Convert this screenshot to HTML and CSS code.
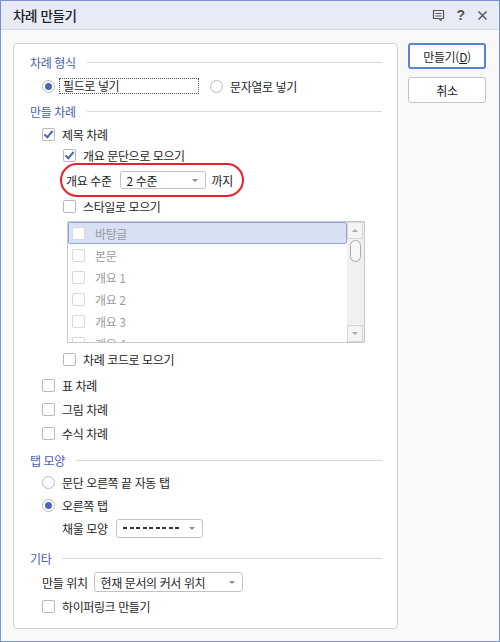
FILE: index.html
```html
<!DOCTYPE html>
<html lang="ko">
<head>
<meta charset="utf-8">
<link rel="stylesheet" href="styles.css">
</head>
<body>
<div class="window">
  <div class="titlebar">
    <div class="title">차례 만들기</div>
    <div class="tb-icons">
      <svg class="tb-ico" width="13" height="13" viewBox="0 0 13 13"><path d="M1.5 1.5h10v8h-2.5v2l-2-2H1.5z" fill="none" stroke="#555" stroke-width="1.2" stroke-linejoin="round"/><path d="M3.5 4.5h6M3.5 7h6" stroke="#555" stroke-width="1.2"/></svg>
      <span class="tb-q">?</span>
      <svg class="tb-ico" width="11" height="11" viewBox="0 0 11 11"><path d="M1.5 1.5l8 8M9.5 1.5l-8 8" stroke="#555" stroke-width="1.4"/></svg>
    </div>
  </div>
  <div class="body">
    <div class="panel">
      <div class="row hdr m8"><span class="hdr-text">차례 형식</span><span class="hdr-line"></span></div>
      <div class="row l1 m4">
        <span class="radio on"></span><span class="lbl focus">필드로 넣기</span>
        <span class="radio r2"></span><span class="lbl">문자열로 넣기</span>
      </div>
      <div class="row hdr m5"><span class="hdr-text">만들 차례</span><span class="hdr-line"></span></div>
      <div class="row l1 m3"><span class="cb on"></span><span class="lbl">제목 차례</span></div>
      <div class="row l2 m1"><span class="cb on"></span><span class="lbl">개요 문단으로 모으기</span></div>
      <div class="row level m5">
        <span class="txt">개요 수준</span>
        <span class="combo c-level"><span>2 수준</span><span class="arrow"></span></span>
        <span class="txt until">까지</span>
        <span class="mark"></span>
      </div>
      <div class="row l2 m6"><span class="cb"></span><span class="lbl">스타일로 모으기</span></div>
      <div class="listbox">
        <div class="items">
          <div class="item sel"><span class="cb dis"></span><span>바탕글</span></div>
          <div class="item"><span class="cb dis"></span><span>본문</span></div>
          <div class="item"><span class="cb dis"></span><span>개요 1</span></div>
          <div class="item"><span class="cb dis"></span><span>개요 2</span></div>
          <div class="item"><span class="cb dis"></span><span>개요 3</span></div>
          <div class="item"><span class="cb dis"></span><span>개요 4</span></div>
        </div>
        <div class="scrollbar">
          <div class="sb-btn"><span class="sb-up"></span></div>
          <div class="sb-track"><div class="sb-thumb"></div></div>
          <div class="sb-btn"><span class="sb-down"></span></div>
        </div>
      </div>
      <div class="row l2 m6"><span class="cb"></span><span class="lbl">차례 코드로 모으기</span></div>
      <div class="row l1 m6"><span class="cb"></span><span class="lbl">표 차례</span></div>
      <div class="row l1 m4"><span class="cb"></span><span class="lbl">그림 차례</span></div>
      <div class="row l1 m4"><span class="cb"></span><span class="lbl">수식 차례</span></div>
      <div class="row hdr m7"><span class="hdr-text">탭 모양</span><span class="hdr-line"></span></div>
      <div class="row l1 m2"><span class="radio"></span><span class="lbl">문단 오른쪽 끝 자동 탭</span></div>
      <div class="row l1 m3"><span class="radio on"></span><span class="lbl">오른쪽 탭</span></div>
      <div class="row fill m3">
        <span class="txt">채울 모양</span>
        <span class="combo c-fill"><span class="dashes"></span><span class="arrow"></span></span>
      </div>
      <div class="row hdr m10"><span class="hdr-text">기타</span><span class="hdr-line"></span></div>
      <div class="row pos m4">
        <span class="txt">만들 위치</span>
        <span class="combo c-pos"><span>현재 문서의 커서 위치</span><span class="arrow"></span></span>
      </div>
      <div class="row l1 m4"><span class="cb"></span><span class="lbl">하이퍼링크 만들기</span></div>
    </div>
    <div class="buttons">
      <div class="btn primary">만들기(<u>D</u>)</div>
      <div class="btn">취소</div>
    </div>
  </div>
</div>
</body>
</html>
```
FILE: styles.css
```css
* { box-sizing: border-box; }
html, body { margin: 0; padding: 0; }
body {
  font-family: "Noto Sans CJK KR", "Noto Sans", sans-serif;
  font-size: 12px;
  letter-spacing: -0.4px;
  color: #1e1e1e;
  background: #fff;
}
.window {
  width: 500px;
  height: 642px;
  border: 1px solid #7b92d2;
  background: #f9f9f9;
  display: flex;
  flex-direction: column;
}
.titlebar {
  height: 29px;
  flex: none;
  background: #e8eaf5;
  border-bottom: 1px solid #d3d7e6;
  display: flex;
  align-items: center;
  justify-content: space-between;
  padding: 0 11px 0 12px;
}
.title {
  font-size: 13.5px;
  font-weight: 500;
  color: #222;
  letter-spacing: -0.4px;
}
.tb-icons { display: flex; align-items: center; }
.tb-ico { display: block; }
.tb-icons svg:first-child { margin-right: 11px; }
.tb-q {
  font-family: "Liberation Sans", sans-serif;
  font-weight: bold;
  font-size: 14px;
  color: #555;
  margin-right: 12px;
  letter-spacing: 0;
}
.body {
  display: flex;
  padding: 13px 12px 0 12px;
  gap: 10px;
}
.panel {
  width: 385px;
  height: 586px;
  background: #fff;
  border: 1px solid #cfcfcf;
  border-radius: 4px;
  padding: 0 15px 0 16px;
}
.row {
  height: 20px;
  display: flex;
  align-items: center;
  white-space: nowrap;
}
.m1 { margin-top: 1px; }
.m2 { margin-top: 2px; }
.m3 { margin-top: 3px; }
.m4 { margin-top: 4px; }
.m5 { margin-top: 5px; }
.m6 { margin-top: 6px; }
.m7 { margin-top: 7px; }
.m8 { margin-top: 8px; }
.m10 { margin-top: 10px; }
.hdr-text { color: #4a60ab; }
.hdr-line {
  flex: 1;
  height: 1px;
  background: #d8d8d8;
  margin-left: 11px;
}
.l1 { padding-left: 12px; }
.l2 { padding-left: 33px; }
.lbl { margin-left: 7px; }
.cb {
  width: 13px;
  height: 13px;
  border: 1px solid #b9b9b9;
  border-radius: 2px;
  background: #fff;
  flex: none;
  position: relative;
}
.cb.on::after {
  content: "";
  position: absolute;
  left: 3px;
  top: 0px;
  width: 3px;
  height: 7px;
  border-right: 2px solid #4a66b8;
  border-bottom: 2px solid #4a66b8;
  transform: rotate(40deg);
}
.cb.dis { border-color: #d9d9d9; }
.radio {
  width: 13px;
  height: 13px;
  border: 1px solid #b9b9b9;
  border-radius: 50%;
  background: #fff;
  flex: none;
  display: flex;
  align-items: center;
  justify-content: center;
}
.radio.on::after {
  content: "";
  width: 7px;
  height: 7px;
  border-radius: 50%;
  background: #4a66b8;
}
.focus {
  margin-left: 4px;
  padding: 0 0 0 3px;
  width: 140px;
  height: 16px;
  line-height: 14px;
  border: 1px dotted #555;
}
.r2 { margin-left: 11px; }
.level { position: relative; padding-left: 36px; }
.txt { flex: none; }
.until { margin-left: 6px; }
.mark {
  position: absolute;
  left: 30px;
  top: -7px;
  width: 184px;
  height: 34px;
  border: 2px solid #e3222e;
  border-radius: 17px;
}
.combo {
  height: 19px;
  border: 1px solid #c2c2c2;
  border-radius: 3px;
  background: #fff;
  display: flex;
  align-items: center;
  justify-content: space-between;
  padding: 0 7px 0 6px;
}
.arrow {
  width: 0;
  height: 0;
  border-left: 3px solid transparent;
  border-right: 3px solid transparent;
  border-top: 3px solid #8a8a8a;
}
.c-level { width: 86px; margin-left: 8px; height: 18px; }
.fill { padding-left: 32px; }
.c-fill { width: 87px; margin-left: 8px; }
.dashes {
  width: 58px;
  height: 2px;
  background: repeating-linear-gradient(90deg, #333 0 4px, transparent 4px 6.5px);
}
.pos { padding-left: 12px; }
.c-pos { width: 149px; margin-left: 6px; height: 20px; }
.listbox {
  margin: 5px 0 0 37px;
  width: 298px;
  height: 122px;
  border: 1px solid #c9c9c9;
  display: flex;
  background: #fff;
}
.items {
  flex: 1;
  overflow: hidden;
  color: #9b9b9b;
}
.item {
  height: 22px;
  display: flex;
  align-items: center;
  padding-left: 3px;
  gap: 10px;
  border: 1px solid transparent;
}
.item.sel {
  background: #d8e0f4;
  border-color: #8fa5de;
  border-radius: 2px;
}
.item .cb { width: 13px; height: 13px; }
.scrollbar {
  width: 17px;
  flex: none;
  background: #f0f0f0;
  display: flex;
  flex-direction: column;
}
.sb-btn {
  height: 17px;
  border: 1px solid #d6d6d6;
  background: #f4f4f4;
  display: flex;
  align-items: center;
  justify-content: center;
  margin: 0 1px 0 0;
}
.sb-up {
  width: 0; height: 0;
  border-left: 3px solid transparent;
  border-right: 3px solid transparent;
  border-bottom: 3px solid #a8a8a8;
}
.sb-down {
  width: 0; height: 0;
  border-left: 3px solid transparent;
  border-right: 3px solid transparent;
  border-top: 3px solid #a8a8a8;
}
.sb-track { flex: 1; padding: 1px 2px 0 3px; }
.sb-thumb {
  width: 11px;
  height: 22px;
  border: 1px solid #a9a9a9;
  border-radius: 6px;
  background: #f7f7f7;
}
.buttons {
  display: flex;
  flex-direction: column;
  gap: 8px;
}
.btn {
  width: 78px;
  height: 26px;
  border: 1px solid #c3c3c3;
  border-radius: 3px;
  background: #fff;
  display: flex;
  align-items: center;
  justify-content: center;
  letter-spacing: -0.3px;
}
.btn.primary { border: 2px solid #5d7fd6; }
.btn u { text-underline-offset: 1px; }
```
